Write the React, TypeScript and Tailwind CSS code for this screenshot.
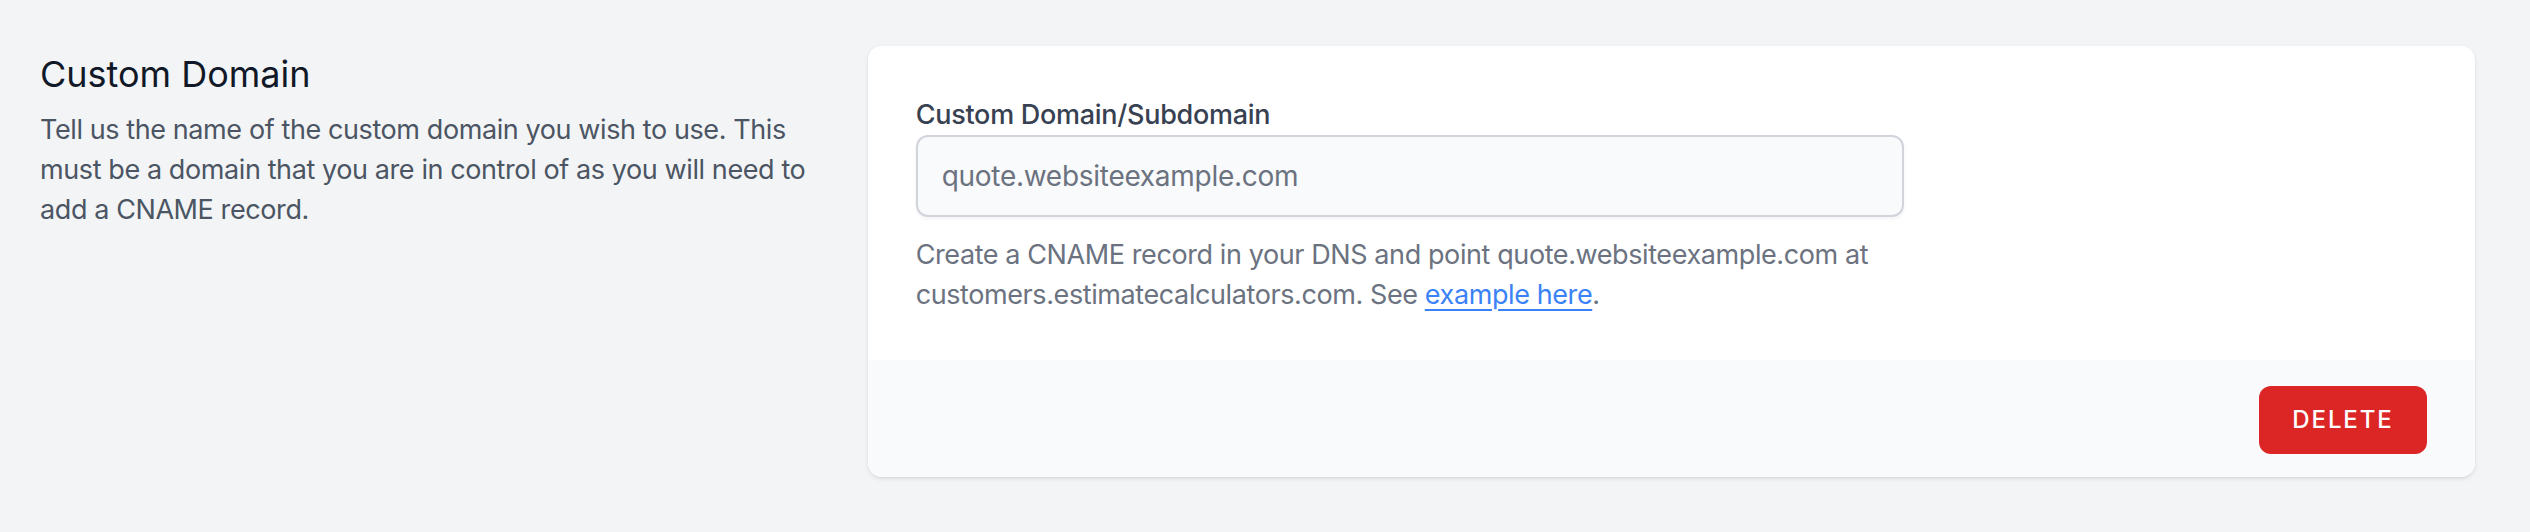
import React from "react";

export default function App() {
  return (
    <div className="min-h-screen bg-[#f3f4f6] font-['Inter','Noto_Sans',sans-serif] antialiased">
      <div className="grid grid-cols-3 gap-[48px] pl-[40px] pr-[55px] pt-[46px]">
        <div>
          <h3 className="text-[36px] leading-[56px] font-normal text-[#111827]">
            Custom Domain
          </h3>
          <p className="mt-[8px] text-[27px] leading-[40px] text-[#4b5563] tracking-[-0.015em]">
            Tell us the name of the custom domain you wish to use. This must be a domain that you are in control of as you will need to add a CNAME record.
          </p>
        </div>
        <div className="col-span-2 overflow-hidden rounded-[14px] bg-white shadow-[0_2px_5px_rgba(0,0,0,0.08),0_1px_2px_rgba(0,0,0,0.06)]">
          <div className="px-[48px] pt-[49px] pb-[45px]">
            <label className="block text-[27px] leading-[40px] font-medium text-[#374151] tracking-[-0.01em]">
              Custom Domain/Subdomain
            </label>
            <input
              type="text"
              placeholder="quote.websiteexample.com"
              className="block h-[82px] w-[988px] rounded-[12px] border-2 border-[#d1d5db] bg-[#f9fafb] px-[24px] text-[28px] text-[#111827] tracking-[-0.01em] shadow-[0_2px_4px_rgba(0,0,0,0.05)] outline-none placeholder:text-[#6b7280]"
            />
            <p className="mt-[18px] w-[988px] text-[27px] leading-[40px] text-[#6b7280] tracking-[-0.015em]">
              Create a CNAME record in your DNS and point quote.websiteexample.com at customers.estimatecalculators.com. See{" "}
              <a href="#" className="text-[#3b82f6] underline decoration-[2px] underline-offset-[5px]">
                example here
              </a>
              .
            </p>
          </div>
          <div className="flex justify-end bg-[#f9fafb] px-[48px] pt-[26px] pb-[23px]">
            <button
              type="button"
              className="flex h-[68px] w-[168px] items-center justify-center rounded-[12px] bg-[#dc2626] text-[24px] font-medium uppercase tracking-[0.08em] text-white"
            >
              Delete
            </button>
          </div>
        </div>
      </div>
    </div>
  );
}
